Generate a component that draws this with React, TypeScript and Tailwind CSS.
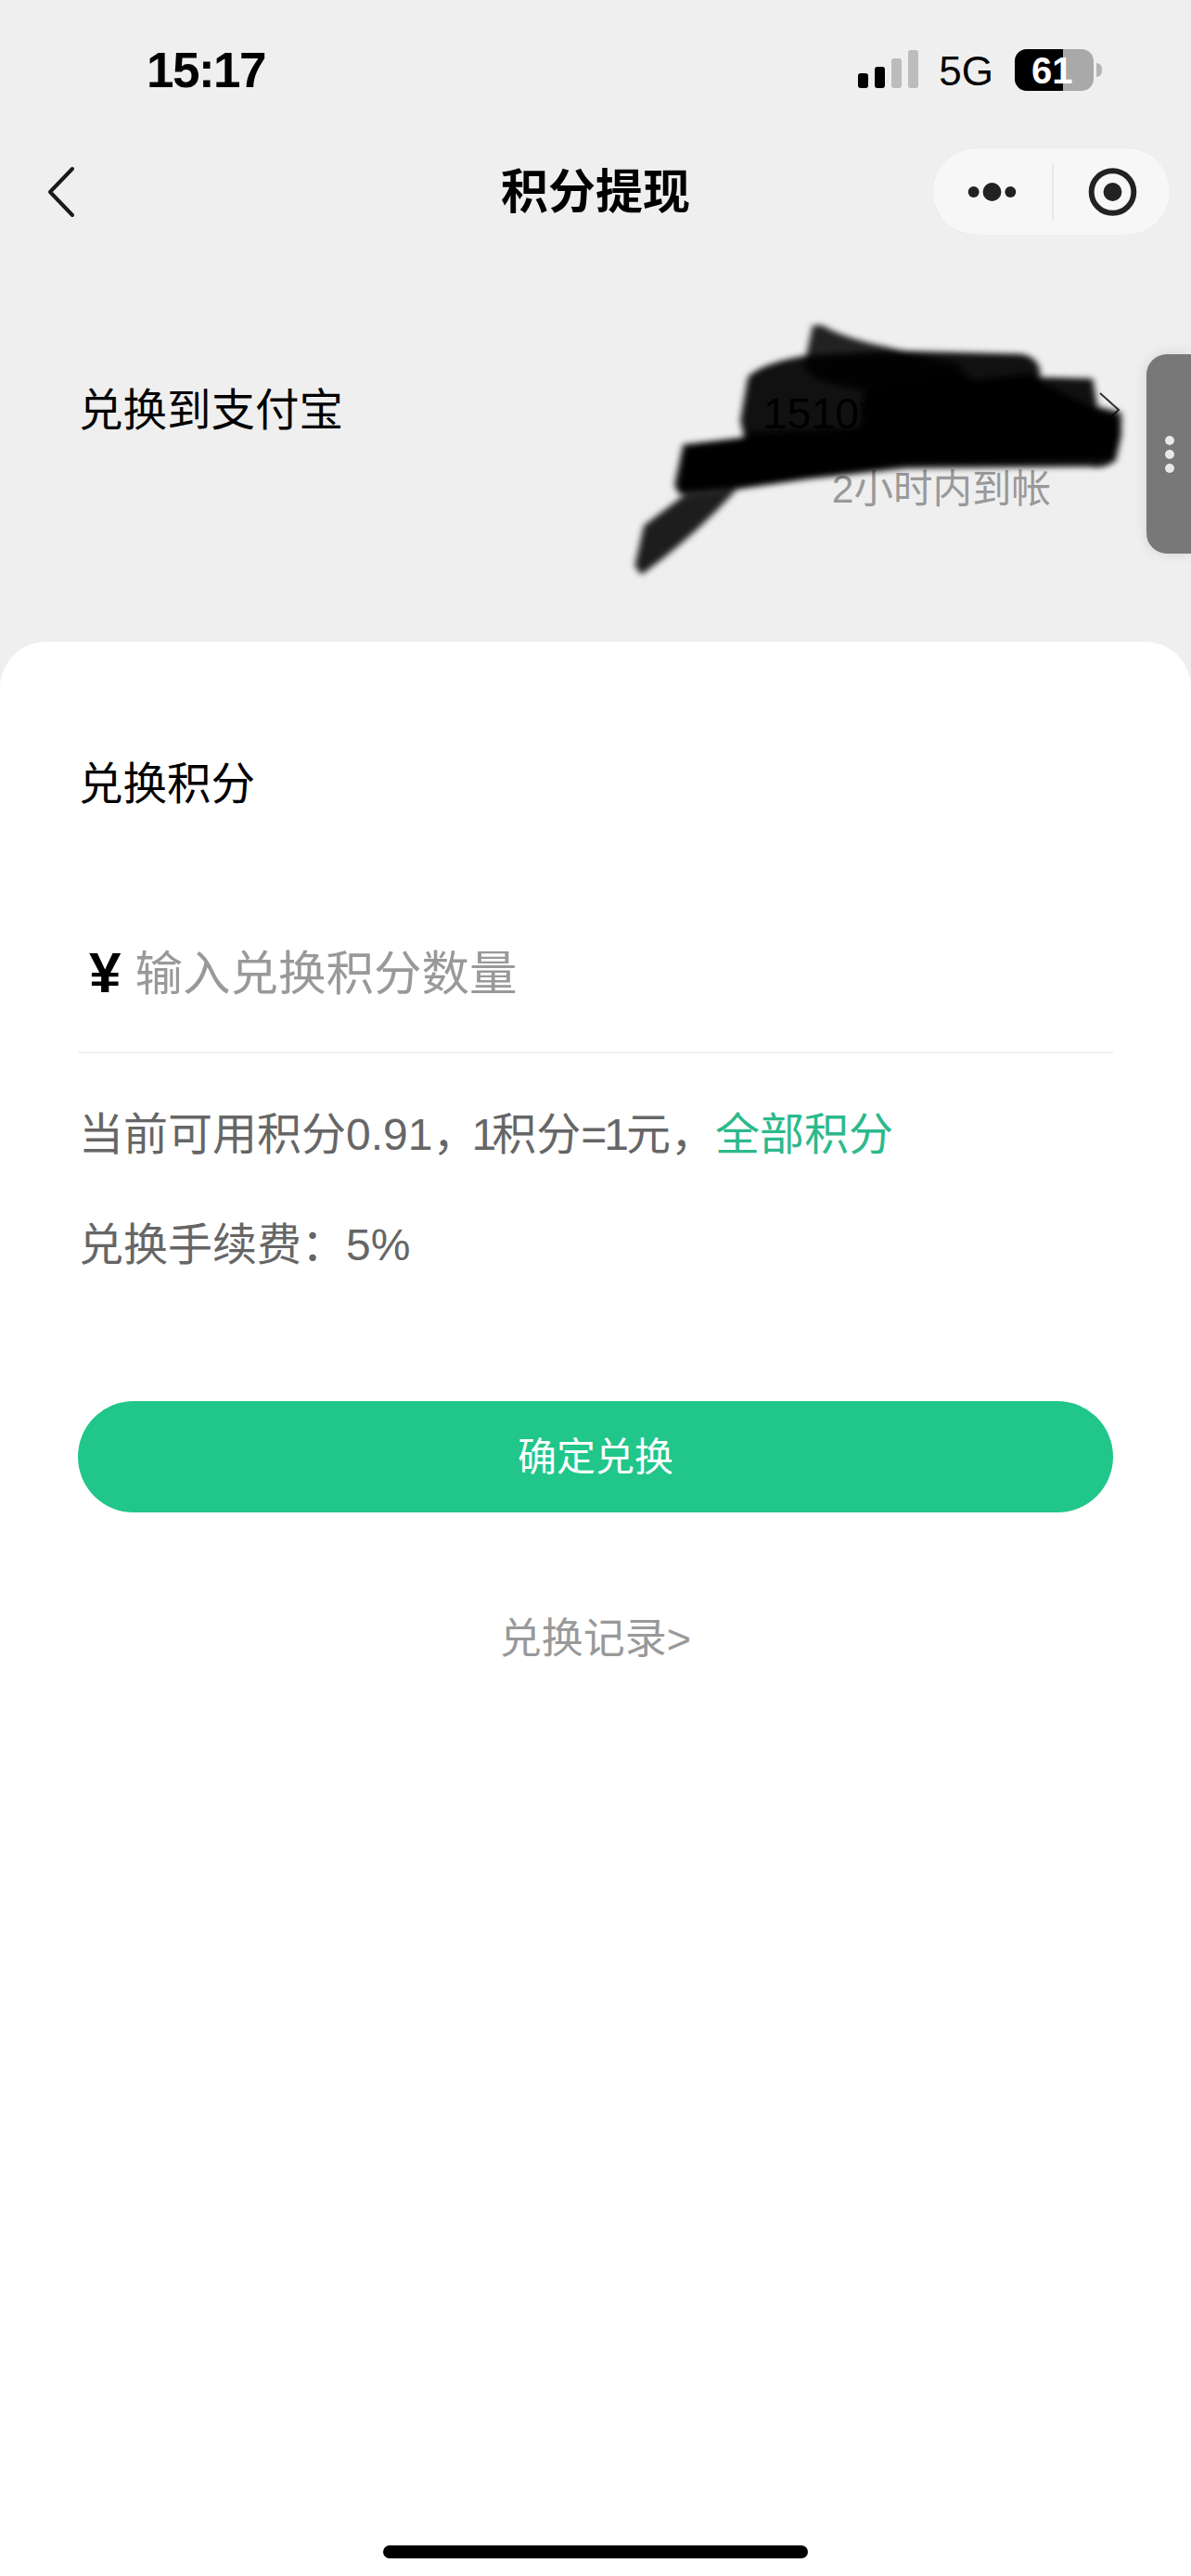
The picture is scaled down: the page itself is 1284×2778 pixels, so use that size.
import React from "react";

const font = "font-['Liberation_Sans','Noto_Sans_CJK_SC',sans-serif]";

function StatusBar() {
  return (
    <div className="flex h-[159px] items-start justify-between pl-[158px] pr-[96px] pt-[48px]">
      <span className="text-[53px] leading-[56px] font-bold tracking-[-1.5px] text-black">15:17</span>
      <div className="flex items-start pt-[5px]">
        <svg width="66" height="42" viewBox="0 0 66 42" className="mr-[21px]">
          <rect x="0" y="26" width="11" height="16" rx="3" fill="#000" />
          <rect x="18" y="19" width="11" height="23" rx="3" fill="#000" />
          <rect x="36" y="10" width="11" height="32" rx="3" fill="#bcbcbc" />
          <rect x="54" y="1" width="11" height="41" rx="3" fill="#bcbcbc" />
        </svg>
        <span className="mr-[23px] mt-[3px] text-[44px] leading-[42px] text-black">5G</span>
        <div className="relative h-[45px] w-[85px] overflow-hidden rounded-[13px] bg-[#a9a9a9]">
          <div className="h-full w-[52px] bg-black" />
          <span className="absolute left-[18px] top-[2px] text-[40px] leading-[42px] font-bold text-white">61</span>
        </div>
        <div className="ml-[3px] mt-[15px] h-[15px] w-[6px] rounded-r-full bg-[#b5b5b5]" />
      </div>
    </div>
  );
}

function NavBar() {
  return (
    <div className="relative flex h-[95px] items-center justify-between pl-[50px] pr-[22px]">
      <svg width="32" height="56" viewBox="0 0 32 56">
        <path d="M28 3 L4 28 L28 53" fill="none" stroke="#1a1a1a" strokeWidth="4" strokeLinecap="round" strokeLinejoin="round" />
      </svg>
      <span className="absolute left-0 right-0 top-[19px] text-center text-[51px] leading-[60px] font-bold text-black">积分提现</span>
      <div className="relative flex h-[95px] w-[257px] items-center rounded-full border border-[#ececec] bg-[#f7f7f7]">
        <svg width="257" height="95" viewBox="0 0 257 95">
          <circle cx="44" cy="48" r="6" fill="#222" />
          <circle cx="64" cy="48" r="10" fill="#222" />
          <circle cx="84" cy="48" r="6" fill="#222" />
          <line x1="130" y1="18" x2="130" y2="78" stroke="#e3e3e3" strokeWidth="1.5" />
          <circle cx="195" cy="48" r="23" fill="none" stroke="#222" strokeWidth="6" />
          <circle cx="195" cy="48" r="10" fill="#222" />
        </svg>
      </div>
    </div>
  );
}

function Scribble() {
  return (
    <svg
      className="pointer-events-none absolute left-[640px] top-[320px] h-[320px] w-[644px]"
      viewBox="0 0 1568 960"
      preserveAspectRatio="none"
    >
      <defs>
        <filter id="soft" x="-10%" y="-10%" width="120%" height="120%">
          <feGaussianBlur stdDeviation="9" />
        </filter>
      </defs>
      <g filter="url(#soft)">
        <path d="M405 260 Q440 215 560 190 L800 175 L1120 185 Q1175 195 1172 260 L1310 265 L1322 355 L1385 375 L1385 450 L1370 530 Q1340 560 1300 550 L820 555 L560 590 L370 625 L225 640 L212 610 L235 478 L395 455 L385 400 Z" fill="#000" fillOpacity="0.93" />
        <path d="M395 440 L700 425 L710 300 L960 240 L1000 270 L1150 250 L1180 280 L1320 365 L1385 400 L1370 525 L820 540 L370 615 L225 632 L240 490 L395 455 Z" fill="#000" />
        <path d="M575 92 L600 92 Q650 130 760 160 L965 220 L950 280 L700 300 Q570 280 552 225 Z" fill="#000" fillOpacity="0.86" />
        <path d="M240 640 L375 625 Q260 780 125 900 L108 870 L132 740 Z" fill="#000" fillOpacity="0.88" />
      </g>
    </svg>
  );
}

function SideHandle() {
  return (
    <div className="absolute right-0 top-[382px] flex h-[215px] w-[48px] flex-col items-center justify-center gap-[5px] rounded-l-[22px] bg-[#787878] pl-[2px] shadow-[0_0_14px_rgba(0,0,0,0.12)]">
      <span className="h-[10px] w-[10px] rounded-full bg-[#e8e8e8]" />
      <span className="h-[10px] w-[10px] rounded-full bg-[#e8e8e8]" />
      <span className="h-[10px] w-[10px] rounded-full bg-[#e8e8e8]" />
    </div>
  );
}

export default function App() {
  return (
    <div className={`relative flex h-[2778px] w-[1284px] flex-col overflow-hidden bg-[#efefef] ${font}`}>
      <StatusBar />
      <NavBar />

      <div className="flex h-[438px] items-start justify-between pl-[85px] pr-[76px] pt-[62px]">
        <span className="mt-[97px] text-[47.5px] leading-[60px] text-black">兑换到支付宝</span>
        <div className="flex items-start">
          <div className="mr-[51px] mt-[103px] flex flex-col items-end">
            <div className="text-[46.5px] leading-[54px] whitespace-nowrap text-black">1510**********0</div>
            <div className="mt-[30px] text-[42.5px] leading-[50px] text-[#999999]">2小时内到帐</div>
          </div>
          <svg width="24" height="38" viewBox="0 0 24 38" className="mt-[107px]">
            <path d="M2 1 L22 19 L2 37" fill="none" stroke="#333" strokeWidth="2" />
          </svg>
        </div>
      </div>

      <div className="flex flex-1 flex-col rounded-t-[50px] bg-white px-[84px] pt-[118px]">
        <div className="pl-[1px] text-[47.5px] leading-[72px] text-black">兑换积分</div>

        <div className="mt-[110px] flex h-[144px] items-start border-b-2 border-[#f0f0f3] pl-[12px] pt-[22px]">
          <span className="mr-[15px] text-[62px] leading-[70px] font-bold text-black">¥</span>
          <span className="text-[51.5px] leading-[72px] text-[#999999]">输入兑换积分数量</span>
        </div>

        <div className="mt-[52px] pl-[1px] text-[48px] leading-[72px] whitespace-nowrap text-[#666666]">
          当前可用积分0.91<span className="tracking-[-6px]">，</span>
          <span className="tracking-[-5px]">1</span>积分<span className="tracking-[-3px]">=1</span>元，
          <span className="text-[#2cb98c]">全部积分</span>
        </div>
        <div className="mt-[47px] pl-[1px] text-[48px] leading-[72px] text-[#666666]">兑换手续费：5%</div>

        <div className="mt-[132px] flex h-[120px] items-center justify-center rounded-full bg-[#20c68a] text-[42px] text-white">确定兑换</div>

        <div className="mt-[102px] text-center text-[45px] leading-[70px] text-[#999999]">兑换记录&gt;</div>

        <div className="mt-auto mb-[19px] h-[14px] w-[458px] self-center rounded-full bg-black" />
      </div>

      <Scribble />
      <SideHandle />
    </div>
  );
}
